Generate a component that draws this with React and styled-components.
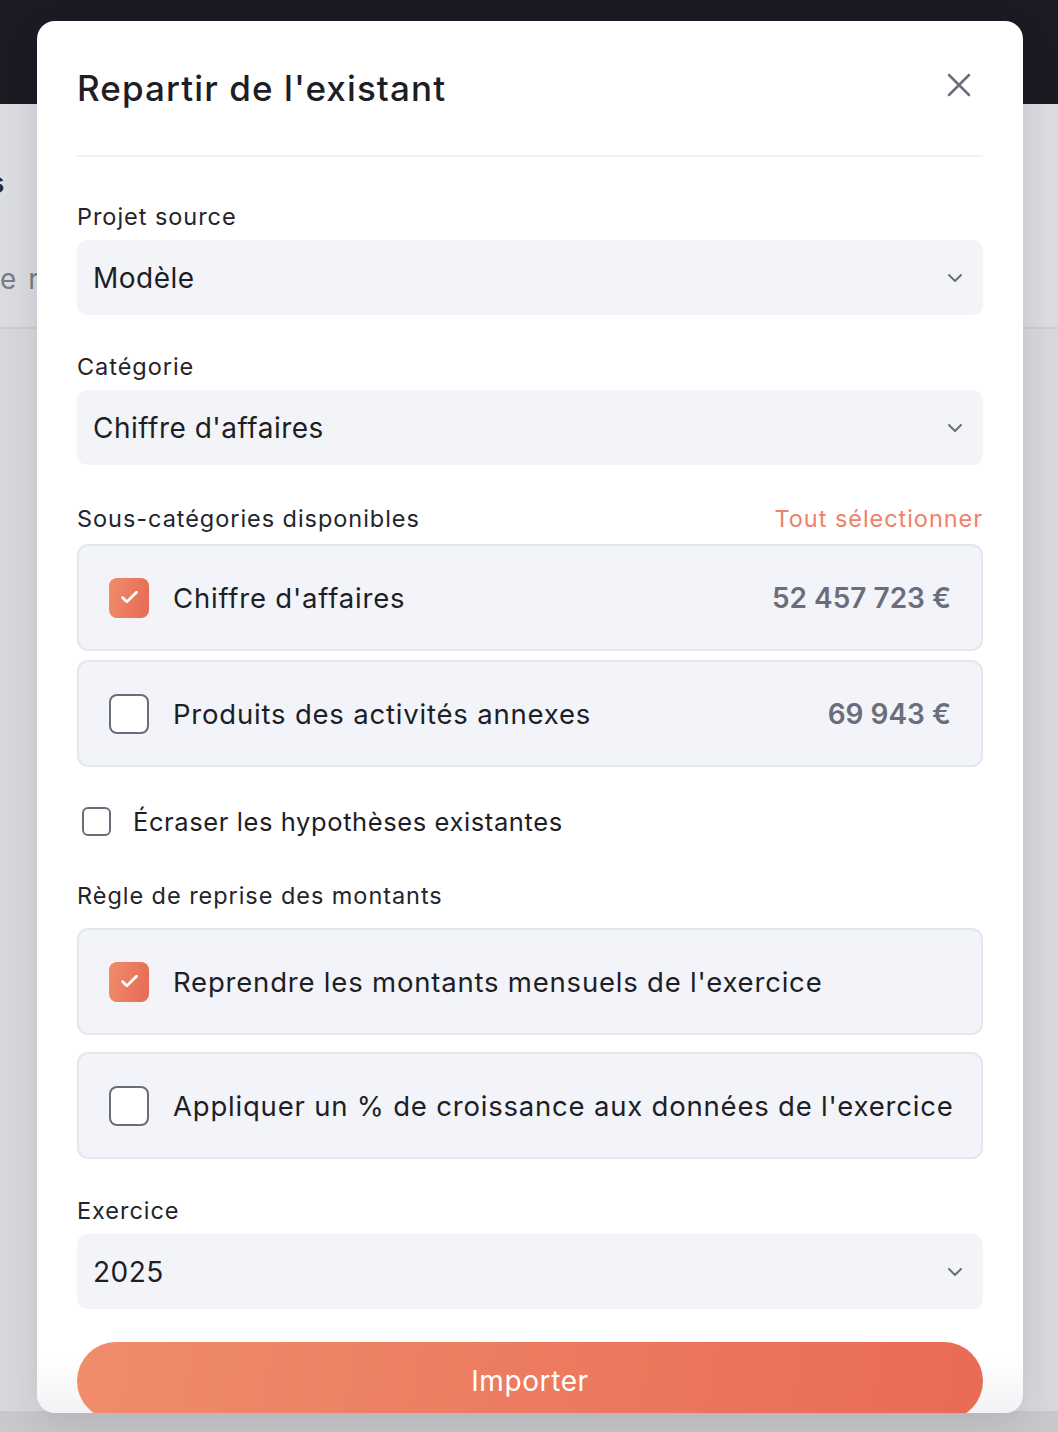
import React, { useState } from "react";
import styled, { createGlobalStyle } from "styled-components";
import { ChevronDown, X, Check } from "lucide-react";

const GlobalStyle = createGlobalStyle`
  * { box-sizing: border-box; }
  body {
    margin: 0;
    font-family: Inter, "Noto Sans", sans-serif;
    background: #c9c9cd;
  }
`;

const Screen = styled.div`
  position: relative;
  width: 1058px;
  height: 1432px;
  overflow: hidden;
  background: #c9c9cd;
`;

const TopBar = styled.div`
  height: 104px;
  background: #1a1b23;
`;

const PageHead = styled.div`
  height: 225px;
  background: #dcdde1;
  border-bottom: 2px solid #cdced3;
  padding-top: 62px;
  display: flex;
  flex-direction: column;
  gap: 62px;
  font-size: 28px;
  white-space: nowrap;
`;

const PageTitle = styled.div`
  margin-left: -11px;
  font-weight: 600;
  color: #2a2b33;
`;

const PageSub = styled.div`
  color: #7b7c83;
  letter-spacing: 2px;
`;

const PageRest = styled.div`
  height: 1082px;
  background: #d9d9dd;
`;

const Modal = styled.div`
  position: absolute;
  top: 21px;
  left: 37px;
  width: 986px;
  height: 1392px;
  overflow: hidden;
  border-radius: 18px;
  background: linear-gradient(to bottom, #fff calc(100% - 56px), #f3f3f6 100%);
  box-shadow: 0 12px 40px rgba(20, 20, 30, 0.12);
  padding: 0 40px;
`;

const Header = styled.div`
  display: flex;
  align-items: center;
  justify-content: space-between;
  height: 136px;
  border-bottom: 2px solid #eef0f5;
`;

const Title = styled.h2`
  margin: 0;
  font-size: 35px;
  font-weight: 500;
  color: #1d1e26;
  letter-spacing: 1.1px;
`;

const CloseButton = styled.button`
  border: 0;
  background: none;
  padding: 0;
  margin: -6px 4px 0 0;
  display: flex;
  color: #6b6e7a;
  cursor: pointer;
`;

const Body = styled.div`
  display: flex;
  flex-direction: column;
  padding-top: 43px;
`;

const Field = styled.div`
  display: flex;
  flex-direction: column;
  gap: ${(p) => p.$gap || 8}px;
  margin-bottom: ${(p) => p.$after || 0}px;
`;

const LabelRow = styled.div`
  display: flex;
  align-items: center;
  justify-content: space-between;
  height: 32px;
`;

const Label = styled.span`
  font-size: 23.5px;
  color: #23242c;
  letter-spacing: 0.95px;
`;

const LinkButton = styled.button`
  border: 0;
  background: none;
  padding: 0;
  font-family: inherit;
  font-size: 23.5px;
  color: #f0806a;
  letter-spacing: 0.95px;
  cursor: pointer;
`;

const Select = styled.div`
  height: 75px;
  border-radius: 10px;
  background: #f3f4f8;
  display: flex;
  align-items: center;
  justify-content: space-between;
  padding: 0 16px;
  font-size: 28px;
  color: #1d1e26;
  letter-spacing: 0.5px;
  svg {
    color: #6b6e7a;
  }
`;

const List = styled.div`
  display: flex;
  flex-direction: column;
  gap: ${(p) => p.$gap}px;
`;

const Card = styled.label`
  height: 107px;
  border: 2px solid #e5e7ee;
  border-radius: 11px;
  background: #f3f4f9;
  display: flex;
  align-items: center;
  gap: 24px;
  padding: 0 30px;
  cursor: pointer;
`;

const Box = styled.span`
  flex: none;
  width: ${(p) => p.$size}px;
  height: ${(p) => p.$size}px;
  border-radius: ${(p) => (p.$size > 32 ? 8 : 6)}px;
  display: flex;
  align-items: center;
  justify-content: center;
  border: ${(p) => (p.$checked ? "0" : "2px solid #6b6e7a")};
  background: ${(p) =>
    p.$checked ? "linear-gradient(100deg, #f08c6c, #e66a55)" : "#fff"};
  color: #fff;
`;

const CardText = styled.span`
  flex: 1;
  font-size: 27.5px;
  color: #1d1e26;
  letter-spacing: 0.8px;
  white-space: nowrap;
`;

const Amount = styled.span`
  font-size: 28px;
  font-weight: 600;
  color: #6b6e7a;
`;

const InlineCheck = styled.label`
  display: flex;
  align-items: center;
  gap: 22px;
  height: 32px;
  padding-left: 5px;
  margin: 38px 0 42px;
  font-size: 25.5px;
  color: #1d1e26;
  letter-spacing: 0.6px;
  cursor: pointer;
`;

const SubmitButton = styled.button`
  margin-top: 33px;
  height: 78px;
  border: 0;
  border-radius: 40px;
  background: linear-gradient(100deg, #f08c6c, #e86b55);
  color: #fff;
  font-family: inherit;
  font-size: 28px;
  letter-spacing: 0.6px;
  cursor: pointer;
`;

const Checkbox = ({ checked, size }) => (
  <Box $checked={checked} $size={size}>
    {checked && <Check size={21} strokeWidth={3.2} />}
  </Box>
);

const SelectField = ({ label, value, after }) => (
  <Field $after={after}>
    <LabelRow>
      <Label>{label}</Label>
    </LabelRow>
    <Select>
      {value}
      <ChevronDown size={24} strokeWidth={2} />
    </Select>
  </Field>
);

const subCategories = [
  { name: "Chiffre d'affaires", amount: "52 457 723 €" },
  { name: "Produits des activités annexes", amount: "69 943 €" },
];

const rules = [
  "Reprendre les montants mensuels de l'exercice",
  "Appliquer un % de croissance aux données de l'exercice",
];

export default function App() {
  const [selected, setSelected] = useState([0]);
  const [rule, setRule] = useState(0);
  const [overwrite, setOverwrite] = useState(false);

  const toggle = (i) =>
    setSelected((s) => (s.includes(i) ? s.filter((x) => x !== i) : [...s, i]));

  return (
    <Screen>
      <GlobalStyle />
      <TopBar />
      <PageHead>
        <PageTitle>s</PageTitle>
        <PageSub>e réel</PageSub>
      </PageHead>
      <PageRest />

      <Modal>
        <Header>
          <Title>Repartir de l'existant</Title>
          <CloseButton aria-label="Fermer">
            <X size={40} strokeWidth={1.5} />
          </CloseButton>
        </Header>
        <Body>
          <SelectField label="Projet source" value="Modèle" after={35} />
          <SelectField label="Catégorie" value="Chiffre d'affaires" after={37} />

          <Field $gap={10}>
            <LabelRow>
              <Label>Sous-catégories disponibles</Label>
              <LinkButton onClick={() => setSelected([0, 1])}>
                Tout sélectionner
              </LinkButton>
            </LabelRow>
            <List $gap={9}>
              {subCategories.map((c, i) => (
                <Card key={c.name} onClick={() => toggle(i)}>
                  <Checkbox checked={selected.includes(i)} size={40} />
                  <CardText>{c.name}</CardText>
                  <Amount>{c.amount}</Amount>
                </Card>
              ))}
            </List>
          </Field>

          <InlineCheck onClick={() => setOverwrite(!overwrite)}>
            <Checkbox checked={overwrite} size={29} />
            Écraser les hypothèses existantes
          </InlineCheck>

          <Field $gap={17} $after={35}>
            <LabelRow>
              <Label>Règle de reprise des montants</Label>
            </LabelRow>
            <List $gap={17}>
              {rules.map((r, i) => (
                <Card key={r} onClick={() => setRule(i)}>
                  <Checkbox checked={rule === i} size={40} />
                  <CardText>{r}</CardText>
                </Card>
              ))}
            </List>
          </Field>

          <SelectField label="Exercice" value="2025" />

          <SubmitButton>Importer</SubmitButton>
        </Body>
      </Modal>
    </Screen>
  );
}
